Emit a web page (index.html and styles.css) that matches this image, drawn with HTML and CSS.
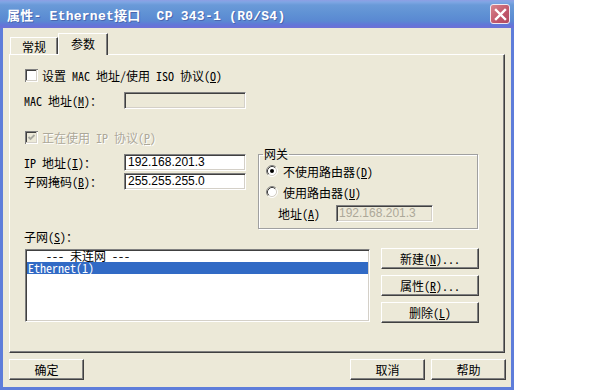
FILE: index.html
```html
<!DOCTYPE html>
<html>
<head>
<meta charset="utf-8">
<title>属性</title>
<link rel="stylesheet" href="styles.css">
</head>
<body>
<div class="window">
  <div class="titlebar">
    <span class="title">属性- Ethernet接口  CP 343-1 (R0/S4)</span>
    <div class="close">
      <svg width="13" height="13" viewBox="0 0 13 13"><path d="M2 2 L11 11 M11 2 L2 11" stroke="#fff" stroke-width="2.4" stroke-linecap="square"/></svg>
    </div>
  </div>
  <div class="client">
    <div class="tabs">
      <div class="tab">常规</div>
      <div class="tab active">参数</div>
    </div>
    <div class="panel">
      <div class="row check-row r1">
        <svg class="cb" width="13" height="13" viewBox="0 0 13 13"><rect width="13" height="13" fill="#fff"/><path d="M0 0h13v1H1v12H0z" fill="#808080"/><path d="M1 1h11v1H2v10H1z" fill="#404040"/><path d="M1 12h11V1h-1v10H1z" fill="#D4D0C8"/><rect x="2" y="2" width="9" height="9" fill="#fff"/></svg>
        <span>设置 MAC 地址/使用 ISO 协议(<u>O</u>)</span>
      </div>
      <div class="row r2">
        <span class="label">MAC 地址(<u>M</u>)：</span>
        <span class="field disabled wide"></span>
      </div>
      <div class="row check-row r3 dis">
        <svg class="cb" width="13" height="13" viewBox="0 0 13 13"><rect width="13" height="13" fill="#fff"/><path d="M0 0h13v1H1v12H0z" fill="#808080"/><path d="M1 1h11v1H2v10H1z" fill="#404040"/><path d="M1 12h11V1h-1v10H1z" fill="#D4D0C8"/><rect x="2" y="2" width="9" height="9" fill="#ECE9D8"/><path d="M3.5 6 L5.5 8 L9.5 4" stroke="#A8A8A0" stroke-width="1.8" fill="none"/></svg>
        <span>正在使用 IP 协议(<u>P</u>)</span>
      </div>
      <div class="mid">
        <div class="fields">
          <div class="row frow">
            <span class="label">IP 地址(<u>I</u>)：</span>
            <span class="field wide">192.168.201.3</span>
          </div>
          <div class="row frow">
            <span class="label">子网掩码(<u>B</u>)：</span>
            <span class="field wide">255.255.255.0</span>
          </div>
        </div>
        <fieldset class="group">
          <legend>网关</legend>
          <div class="radio-row first">
            <svg class="radio" width="12" height="12" viewBox="0 0 12 12"><circle cx="6" cy="6" r="4.5" fill="#fff"/><path d="M9.89 2.11 A5.5 5.5 0 0 0 2.11 9.89" stroke="#808080" fill="none"/><path d="M9.89 2.11 A5.5 5.5 0 0 1 2.11 9.89" stroke="#fff" fill="none"/><path d="M9.18 2.82 A4.5 4.5 0 0 0 2.82 9.18" stroke="#404040" fill="none"/><path d="M9.18 2.82 A4.5 4.5 0 0 1 2.82 9.18" stroke="#D4D0C8" fill="none"/><circle cx="6" cy="6" r="2" fill="#000"/></svg>
            <span>不使用路由器(<u>D</u>)</span>
          </div>
          <div class="radio-row">
            <svg class="radio" width="12" height="12" viewBox="0 0 12 12"><circle cx="6" cy="6" r="4.5" fill="#fff"/><path d="M9.89 2.11 A5.5 5.5 0 0 0 2.11 9.89" stroke="#808080" fill="none"/><path d="M9.89 2.11 A5.5 5.5 0 0 1 2.11 9.89" stroke="#fff" fill="none"/><path d="M9.18 2.82 A4.5 4.5 0 0 0 2.82 9.18" stroke="#404040" fill="none"/><path d="M9.18 2.82 A4.5 4.5 0 0 1 2.82 9.18" stroke="#D4D0C8" fill="none"/></svg>
            <span>使用路由器(<u>U</u>)</span>
          </div>
          <div class="row addr-row">
            <span class="addr-label">地址(<u>A</u>)</span>
            <span class="field disabled small">192.168.201.3</span>
          </div>
        </fieldset>
      </div>
      <div class="sublabel">子网(<u>S</u>)：</div>
      <div class="subnet">
        <div class="listbox">
          <div class="item">   --- 未连网 ---</div>
          <div class="item sel">Ethernet(1)</div>
        </div>
        <div class="btncol">
          <div class="btn side">新建(<u>N</u>)...</div>
          <div class="btn side">属性(<u>R</u>)...</div>
          <div class="btn side">删除(<u>L</u>)</div>
        </div>
      </div>
    </div>
    <div class="bottom">
      <div class="btn dlg">确定</div>
      <div class="btn dlg push">取消</div>
      <div class="btn dlg">帮助</div>
    </div>
  </div>
</div>
</body>
</html>
```

FILE: styles.css
```css
* { box-sizing: border-box; }

body {
  margin: 0;
  background: #fff;
  font-family: "Noto Sans Mono CJK SC", "Noto Sans CJK SC", monospace;
  font-size: 12px;
  color: #000;
}

.window {
  width: 514px;
  height: 390px;
  display: flex;
  flex-direction: column;
}

.titlebar {
  height: 28px;
  flex: none;
  display: flex;
  align-items: center;
  padding-left: 7px;
  background: linear-gradient(to bottom, #8E9FE4 0, #7FA6E4 2px, #6A9AD8 5px, #5F91D4 14px, #5A88D2 21px, #6275D8 25px, #6E70D6 28px);
}

.title {
  font-family: "Liberation Mono", "Noto Sans CJK SC", monospace;
  font-weight: bold;
  font-size: 13px;
  letter-spacing: 0.25px;
  color: #fff;
  white-space: pre;
  text-shadow: 1px 1px 0 #4A66B0;
}

.close {
  margin-left: auto;
  margin-right: 4px;
  width: 20px;
  height: 20px;
  border: 1px solid #F0E8F0;
  border-radius: 3px;
  background: linear-gradient(135deg, #D8848C, #C0566A 60%, #B04A60);
  display: flex;
  align-items: center;
  justify-content: center;
}

.client {
  flex: 1;
  background: #ECE9D8;
  border: solid #5E7DDA;
  border-width: 0 3px 3px 3px;
  padding: 5px 5px 0 6px;
  display: flex;
  flex-direction: column;
}

.tabs {
  display: flex;
  align-items: flex-end;
  height: 21px;
  padding-left: 1px;
  position: relative;
  z-index: 1;
}

.tab {
  height: 17px;
  width: 48px;
  display: flex;
  align-items: center;
  justify-content: center;
  border: 1px solid;
  border-color: #fff #404040 transparent #fff;
  border-bottom: none;
  box-shadow: inset -1px 0 0 #808080;
  background: #ECE9D8;
  padding-top: 1px;
}

.tab.active {
  height: 22px;
  width: 50px;
  margin-bottom: -1px;
  margin-left: 0;
  padding-top: 0;
  padding-bottom: 2px;
}

.panel {
  width: 496px;
  height: 299px;
  border: 1px solid;
  border-color: #fff #404040 #404040 #fff;
  box-shadow: inset -1px -1px 0 #808080;
  padding: 11px 0 0 14px;
}

.row {
  display: flex;
  align-items: center;
}

.check-row {
  height: 18px;
}

.check-row .cb {
  margin-left: 1px;
  margin-right: 4px;
  flex: none;
}

.r2 {
  margin-top: 8px;
  height: 17px;
}

.r3 {
  margin-top: 19px;
}

.dis {
  color: #ACA899;
  text-shadow: 1px 1px 0 #fff;
}

.label {
  width: 100px;
  flex: none;
}

.field {
  display: block;
  height: 17px;
  border: 1px solid;
  border-color: #808080 #fff #fff #808080;
  box-shadow: inset 1px 1px 0 #404040, inset -1px -1px 0 #D4D0C8;
  background: #fff;
  font-family: "Liberation Sans", sans-serif;
  font-size: 12px;
  line-height: 15px;
  padding: 0 3px;
  white-space: nowrap;
}

.field.disabled {
  background: #ECE9D8;
  color: #ACA899;
}

.field.wide {
  width: 122px;
}

.field.small {
  width: 97px;
  padding-left: 2px;
}

.mid {
  display: flex;
  align-items: flex-start;
  gap: 12px;
}

.fields {
  width: 222px;
  padding-top: 8px;
  display: flex;
  flex-direction: column;
  gap: 2px;
}

.frow {
  height: 17px;
}

.group {
  margin: 2px 0 0 0;
  width: 220px;
  height: 81px;
  border: 1px solid #A0A0A0;
  box-shadow: inset 1px 1px 0 #fff, 1px 1px 0 #fff;
  padding: 0 0 0 7px;
}

.group legend {
  padding: 0 1px;
  margin-left: -3px;
  line-height: 12px;
}

.radio-row {
  display: flex;
  align-items: center;
  height: 16px;
  margin-top: 5px;
}

.radio-row.first {
  margin-top: 3px;
}

.radio {
  flex: none;
  margin-right: 5px;
}

.addr-row {
  height: 17px;
  margin-top: 5px;
  padding-left: 12px;
}

.addr-label {
  width: 58px;
  flex: none;
}

.sublabel {
  margin-top: 1px;
  height: 14px;
  line-height: 14px;
}

.subnet {
  display: flex;
  align-items: flex-start;
  margin-top: 4px;
}

.listbox {
  margin: 1px 0 0 1px;
  width: 345px;
  height: 73px;
  border: 1px solid;
  border-color: #808080 #fff #fff #808080;
  box-shadow: inset 1px 1px 0 #404040, inset -1px -1px 0 #D4D0C8;
  background: #fff;
  padding: 0 1px;
}

.item {
  height: 12px;
  line-height: 12px;
  white-space: pre;
  padding-left: 1px;
}

.item.sel {
  background: #316AC5;
  color: #fff;
}

.btncol {
  margin-left: 11px;
  display: flex;
  flex-direction: column;
  gap: 6px;
}

.btn {
  display: flex;
  align-items: center;
  justify-content: center;
  height: 21px;
  border: 1px solid;
  border-color: #fff #404040 #404040 #fff;
  box-shadow: inset -1px -1px 0 #808080;
  background: #ECE9D8;
}

.btn.side {
  width: 98px;
}

.bottom {
  display: flex;
  gap: 6px;
  margin-top: 6px;
}

.btn.dlg {
  width: 75px;
}

.btn.push {
  margin-left: auto;
}
```
